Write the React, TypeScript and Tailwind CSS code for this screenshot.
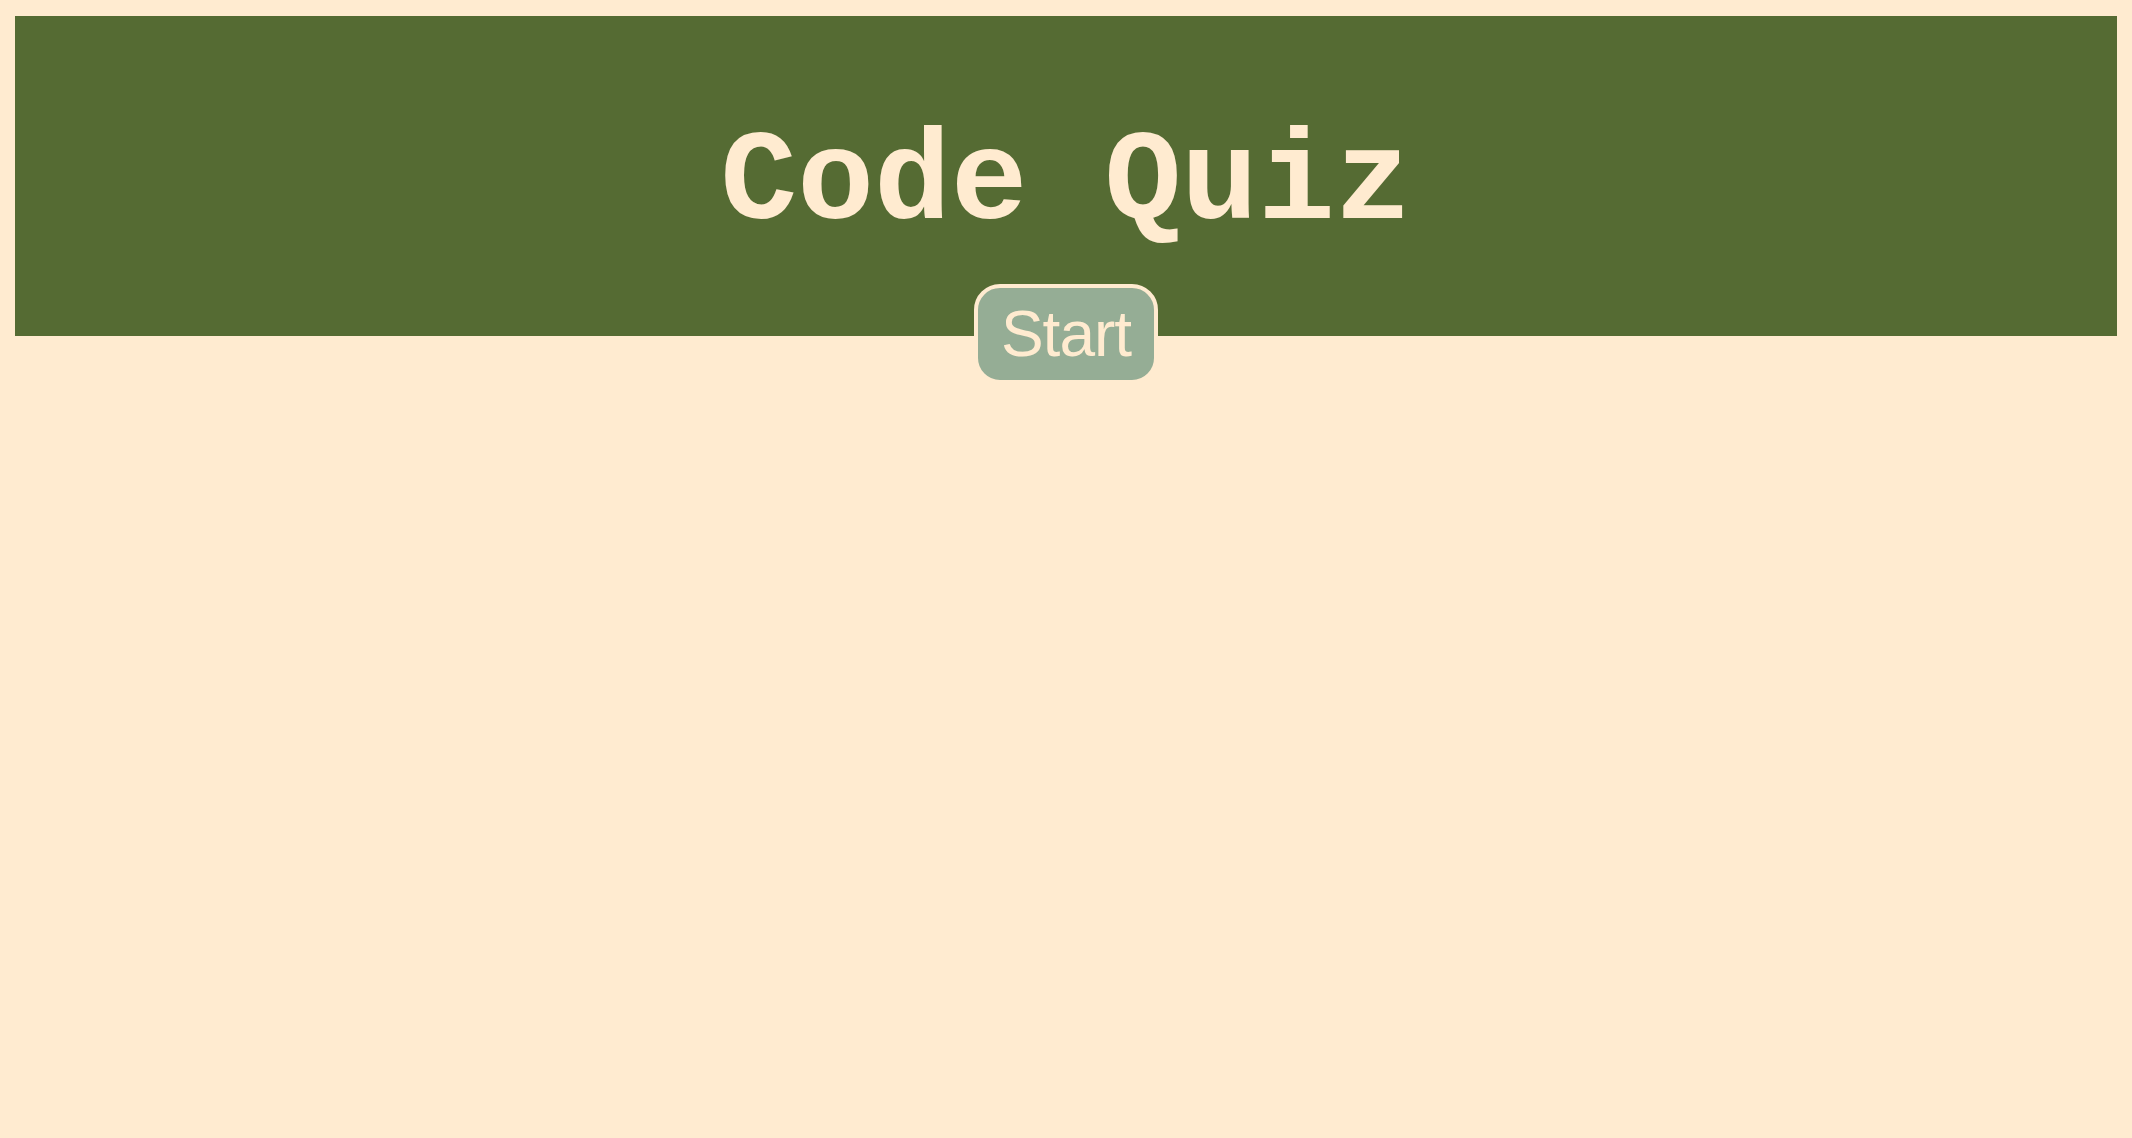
import React from "react";

export default function App() {
  return (
    <div className="min-h-[1138px] w-full bg-[#ffebd0] pt-[16px] px-[15px]">
      <header className="h-[320px] w-full bg-[#556b33] pt-[104px]">
        <h1
          className="text-center text-[128px] leading-none font-bold text-[#ffebd0]"
          style={{ fontFamily: '"Courier New", "Liberation Mono", monospace' }}
        >
          Code Quiz
        </h1>
      </header>
      <div className="flex justify-center -mt-[52px]">
        <button
          className="box-border h-[100px] rounded-[26px] border-4 border-[#ffebd0] bg-[#95ad95] px-[23px] text-[64px] leading-none text-[#ffebd0] tracking-[-1px]"
          style={{ fontFamily: '"Liberation Sans", Arial, sans-serif' }}
        >
          Start
        </button>
      </div>
    </div>
  );
}
